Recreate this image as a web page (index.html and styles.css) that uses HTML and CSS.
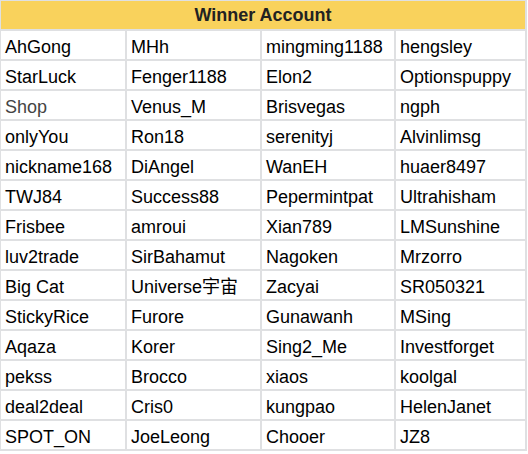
FILE: index.html
```html
<!DOCTYPE html>
<html>
<head>
<meta charset="utf-8">
<link rel="stylesheet" href="styles.css">
</head>
<body>
<div class="sheet">
  <div class="head">Winner Account</div>
  <div class="c">AhGong</div><div class="c">MHh</div><div class="c">mingming1188</div><div class="c">hengsley</div>
  <div class="c">StarLuck</div><div class="c">Fenger1188</div><div class="c">Elon2</div><div class="c">Optionspuppy</div>
  <div class="c muted">Shop</div><div class="c">Venus_M</div><div class="c">Brisvegas</div><div class="c">ngph</div>
  <div class="c">onlyYou</div><div class="c">Ron18</div><div class="c">serenityj</div><div class="c">Alvinlimsg</div>
  <div class="c">nickname168</div><div class="c">DiAngel</div><div class="c">WanEH</div><div class="c">huaer8497</div>
  <div class="c">TWJ84</div><div class="c">Success88</div><div class="c">Pepermintpat</div><div class="c">Ultrahisham</div>
  <div class="c">Frisbee</div><div class="c">amroui</div><div class="c">Xian789</div><div class="c">LMSunshine</div>
  <div class="c">luv2trade</div><div class="c">SirBahamut</div><div class="c">Nagoken</div><div class="c">Mrzorro</div>
  <div class="c">Big Cat</div><div class="c">Universe宇宙</div><div class="c">Zacyai</div><div class="c">SR050321</div>
  <div class="c">StickyRice</div><div class="c">Furore</div><div class="c">Gunawanh</div><div class="c">MSing</div>
  <div class="c">Aqaza</div><div class="c">Korer</div><div class="c">Sing2_Me</div><div class="c">Investforget</div>
  <div class="c">pekss</div><div class="c">Brocco</div><div class="c">xiaos</div><div class="c">koolgal</div>
  <div class="c">deal2deal</div><div class="c">Cris0</div><div class="c">kungpao</div><div class="c">HelenJanet</div>
  <div class="c">SPOT_ON</div><div class="c">JoeLeong</div><div class="c">Chooer</div><div class="c">JZ8</div>
</div>
</body>
</html>
```
FILE: styles.css
```css
html, body {
  margin: 0;
  padding: 0;
  background: #ffffff;
}
.sheet {
  display: inline-grid;
  grid-template-columns: 124px 133px 132px 129px;
  grid-auto-rows: 28px;
  gap: 2px;
  padding: 1px 2px 2px 1px;
  background: #dfe0e2;
  font-family: "Liberation Sans", Arial, "Noto Sans CJK SC", sans-serif;
  font-size: 18px;
  color: #000;
}
.head {
  grid-column: 1 / -1;
  background: #f9d25c;
  font-weight: bold;
  color: #222;
  text-align: center;
  line-height: 29px;
}
.c {
  background: #fff;
  padding: 2px 0 0 4px;
  line-height: 29px;
  white-space: nowrap;
  overflow: hidden;
}
.muted {
  color: #444;
}
```
